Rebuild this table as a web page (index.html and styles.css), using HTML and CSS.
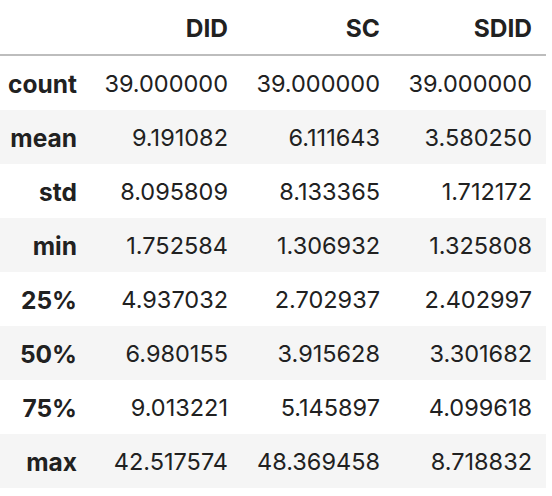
FILE: index.html
```html
<!DOCTYPE html>
<html>
<head>
<meta charset="utf-8">
<link rel="stylesheet" href="styles.css">
</head>
<body>
<table class="df">
  <colgroup>
    <col class="c-idx"><col class="c-val"><col class="c-val"><col class="c-val">
  </colgroup>
  <thead>
    <tr><th class="idx"></th><th>DID</th><th>SC</th><th>SDID</th></tr>
  </thead>
  <tbody>
    <tr><th class="idx">count</th><td>39.000000</td><td>39.000000</td><td>39.000000</td></tr>
    <tr><th class="idx">mean</th><td>9.191082</td><td>6.111643</td><td>3.580250</td></tr>
    <tr><th class="idx">std</th><td>8.095809</td><td>8.133365</td><td>1.712172</td></tr>
    <tr><th class="idx">min</th><td>1.752584</td><td>1.306932</td><td>1.325808</td></tr>
    <tr><th class="idx">25%</th><td>4.937032</td><td>2.702937</td><td>2.402997</td></tr>
    <tr><th class="idx">50%</th><td>6.980155</td><td>3.915628</td><td>3.301682</td></tr>
    <tr><th class="idx">75%</th><td>9.013221</td><td>5.145897</td><td>4.099618</td></tr>
    <tr><th class="idx">max</th><td>42.517574</td><td>48.369458</td><td>8.718832</td></tr>
  </tbody>
</table>
</body>
</html>
```
FILE: styles.css
```css
html, body {
  margin: 0;
  padding: 0;
  background: #ffffff;
}
.df {
  border-collapse: collapse;
  border-spacing: 0;
  font-family: Inter, "Noto Sans", sans-serif;
  color: #212121;
  table-layout: fixed;
  width: 546px;
}
.c-idx {
  width: 90px;
}
.c-val {
  width: 152px;
}
.df th, .df td {
  text-align: right;
  padding: 2px 14px 0 0;
  height: 52px;
  line-height: 28px;
  white-space: nowrap;
  vertical-align: middle;
}
.df th {
  font-weight: 700;
  font-size: 24.5px;
}
.df th.idx {
  padding-right: 13px;
}
.df td {
  font-weight: 400;
  font-size: 23.5px;
}
.df thead th {
  border-bottom: 2px solid #bdbdbd;
}
.df tbody tr:nth-child(even) {
  background: #f5f5f5;
}
```
